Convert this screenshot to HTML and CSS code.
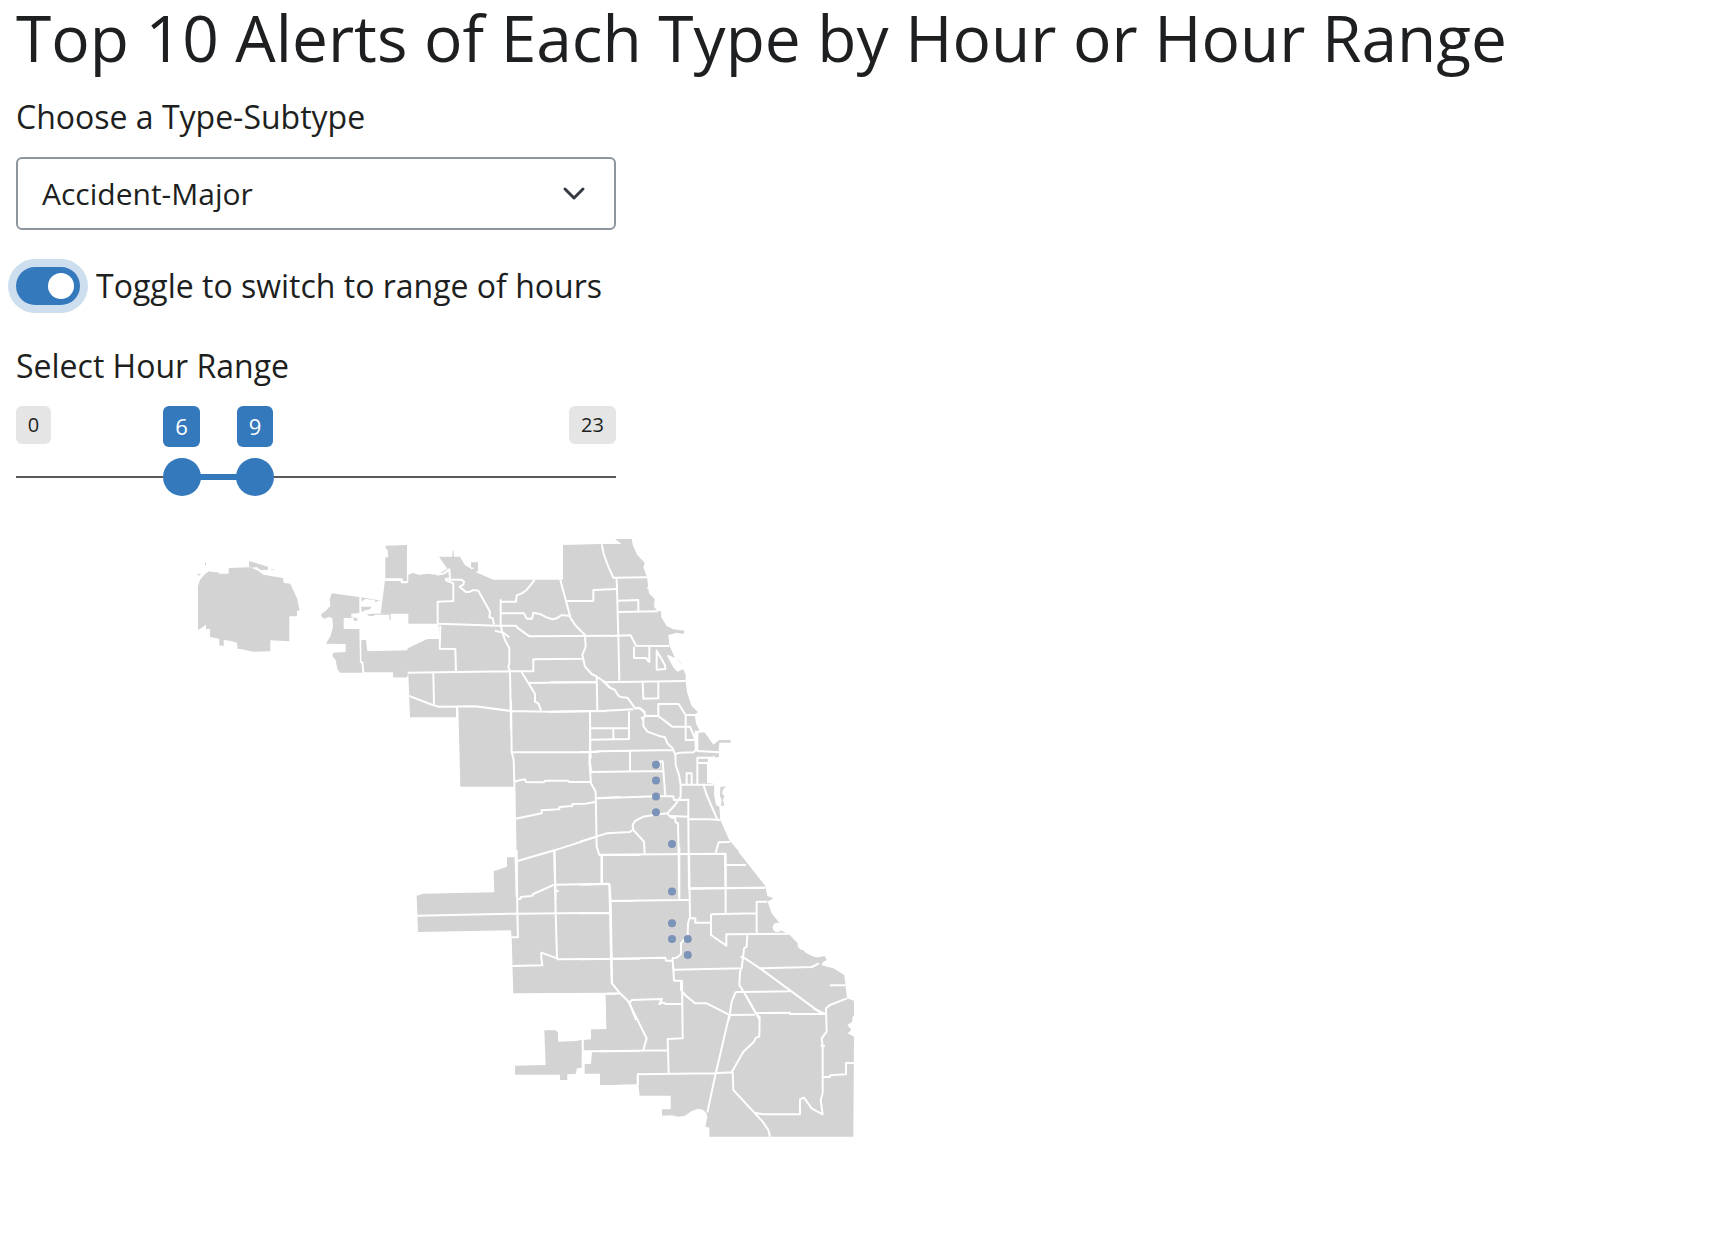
FILE: index.html
```html
<!DOCTYPE html>
<html lang="en">
<head>
<meta charset="utf-8">
<title>Top 10 Alerts</title>
<link rel="stylesheet" href="styles.css">
</head>
<body>
<main class="page">
<h1 class="title">Top 10 Alerts of Each Type by Hour or Hour Range</h1>
<div class="controls">
<div class="label">Choose a Type-Subtype</div>
<div class="select"><span>Accident-Major</span>
<svg class="chevron" viewBox="0 0 24 16"><path d="M3 3l9 9 9-9"/></svg></div>
<div class="toggle-row"><span class="switch"><span class="knob"></span></span><span class="label">Toggle to switch to range of hours</span></div>
<div class="label range-label">Select Hour Range</div>
<div class="slider">
<span class="tag min">0</span><span class="tag max">23</span>
<span class="tag value from">6</span><span class="tag value to">9</span>
<span class="track"></span><span class="bar"></span>
<span class="handle h-from"></span><span class="handle h-to"></span>
</div>
</div>
<svg class="map" viewBox="180 530 690 620">
<g class="land">
<g transform="translate(180 530) scale(.33333)">
<path d="M54,168L60,150 75,132 90,122 92,126 116,127 116,131 146,131 146,114 210,112 235,122 250,134 309,144 311,159 331,161 351,205 359,241 351,242 351,259 328,259 328,334 271,331 271,364 220,365 178,356 173,358 171,338 150,332 131,330 131,348 118,346 118,326 90,321 90,297 78,297 78,284 54,301Z"/>
<path d="M207,93L264,110 264,119 243,121 230,111 217,113 207,110ZM51,133L63,132 56,138ZM75,97h3v8h-3zM273,117h8v2h-8z"/>
<path d="M455,190L538,201 538,249 514,251 514,262 532,264 532,272 521,272 521,264 491,264 491,297 538,297 540,398 545,401 547,428 480,428 472,417 467,390 457,378 460,368 497,366 497,342 438,341 452,317 459,290 457,264 447,261 432,266 423,258 425,251 438,242 451,228 449,209Z"/>
<path d="M544,202L605,212 592,212 588,218 584,210 555,207 545,215ZM544,230L575,230 570,238 555,241 545,247ZM560,252L632,250 632,270 628,268 628,254 585,254 580,258 568,258Z"/>
<path d="M544,330L558,330 562,364 683,361 720,340 720,427 681,427 681,442 640,442 640,427 553,427 550,396 544,392Z"/>
<path d="M617,47L681,45 681,153 669,153 667,145 616,145 616,83 625,80 623,60 617,55Z"/>
</g>
<g transform="translate(370 530) scale(.33333)">
<path d="M45,150L94,150 94,157 115,157 115,134 130,129 147,135 170,131 200,134 232,116 207,80 247,80 248,62 251,62 251,80 270,80 284,104 305,118 314,114 303,112 303,97 324,97 324,122 318,127 370,149 579,149 579,45 692,42 755,42 735,27 785,27 789,47 802,75 824,98 820,112 831,140 834,165 837,190 854,207 852,230 862,242 873,244 874,262 890,288 910,298 944,302 940,312 920,308 895,315 898,345 912,378 930,395 947,435 947,455 952,490 965,528 984,547 974,553 978,580 990,605 1005,608 1030,644 1048,630 1082,630 1082,638 1048,638 1046,663 1047,681 1035,683 1015,690 1011,698 1011,760 1033,762 1000,850 433,850 433,770 271,770 265,534 261,562 120,562 115,430 111,442 69,442 69,427 100,427 113,355 172,327 209,327 205,281 115,281 115,251 32,251Z"/>
</g>
<g transform="translate(580 690) scale(.33333)">
<path d="M-197,240L381,240 381,280 403,282 402,315 408,345 418,350 421,390 447,450 475,482 480,500 520,548 530,565 556,588 556,605 -190,605Z"/>
<path d="M421,291L438,289 428,300 427,312 433,318 429,330 433,346 423,348 425,330 420,318Z"/>
</g>
<g transform="translate(580 820) scale(.33333)">
<path d="M-190,0L420,0 447,60 556,198 562,228 580,235 563,245 575,280 595,305 603,315 600,330 627,343 653,370 653,380 670,395 700,410 720,414 720,600 80,600 78,518 -190,518Z"/>
</g>
<g transform="translate(600 930) scale(.33333)">
<path d="M20,60L610,60 620,72 650,83 674,78 680,90 668,97 665,106 700,115 733,135 741,205 762,212 762,255 757,262 757,275 742,285 754,300 743,310 762,320 760,620 328,620 328,593 316,590 322,560 318,548 308,539 295,536 275,543 255,557 235,560 215,556 186,557 186,538 212,538 212,497 119,497 115,463 0,465 0,298 20,298 17,190Z"/>
</g>
<g transform="translate(400 850) scale(.33333)">
<path d="M650,22L321,22 321,50 281,64 283,127 70,131 50,137 54,246 333,241 335,262 340,433 617,433 620,538 573,538 573,568 550,570 550,602 576,607 573,641 554,643 554,671 602,671 602,705 650,705Z"/>
<path d="M433,541L468,541 474,549 474,575 528,573 547,569 547,653 531,655 527,672 502,673 502,690 480,690 480,674 345,674 345,647 437,645Z"/>
</g>
</g>
<g class="borders">
<g transform="translate(370 530) scale(.33333)">
<path d="M40,150H95V157H113M203,281V215L250,213 250,160 228,151 228,146 240,146 238,118 222,130 200,134M237,149H275L282,155 280,164 269,170 278,178 288,186 300,185 310,180 325,182 360,245 358,262 368,265 372,283M203,281L300,284 380,287 438,287 442,293 478,319 720,317M211,287L209,356 256,357 258,425M113,428L418,424 490,424V388L637,386M392,285V210L394,215H438L440,196 455,190 470,180 494,150M392,210V285L395,300 405,330 418,355 418,402 415,410 420,425 423,600M394,250H462L470,266H486L490,248 510,252 530,262 548,268 560,265 575,255 600,258M375,302L400,308 418,322M571,150L579,180 588,213 602,265 618,288 645,315 647,350 637,375 645,410 665,432 680,440 700,453 720,474M588,213L670,213 670,180 740,177M115,497L180,522 205,530 315,529 423,543 540,545 708,543M190,430L192,523M261,532V562M455,427L475,459 495,492 495,515 505,520 513,541M475,459L680,456M680,438L682,541"/>
</g>
<g transform="translate(550 530) scale(.33333)">
<path d="M155,43L162,75 175,110 190,143 295,142M200,146L205,318 208,452M205,212L265,210V243M205,246L325,244M180,318L242,316 258,347 358,348M252,350V384H288L298,396V350M320,362V419L346,417 345,405ZM0,457H140M163,457L407,453M278,456L280,506 325,505V456M158,455L165,458 180,473 195,480 205,497 215,502 232,503 252,530 255,535 268,533 284,548M0,545L165,542 250,538M292,175h6"/>
<path class="water" d="M355,378L372,387 375,384 388,400 397,415 383,422 374,413Z"/>
</g>
<g transform="translate(400 700) scale(.33333)">
<path d="M333,0L335,155 341,180 343,250 347,480 350,590M337,157L572,156 600,154M340,246L362,240 375,238 378,246 412,247 432,247 435,242 505,242 507,246 572,246M570,35L571,155 572,170 568,185 573,250 587,275 590,440 598,465 605,465V550M347,356L425,340V331L478,328V321L517,318V312L555,311 585,306M590,295L660,291M350,484L463,451 510,436 590,410M463,450L467,600"/>
</g>
<g transform="translate(580 690) scale(.33333)">
<path d="M30,62V186L28,205 35,250M30,115L147,114M100,116V147M147,64V147L30,149M150,183V243M35,246L250,243M52,325L230,319H280L282,330 325,329V388L327,600M237,235L240,214H248L256,319M0,186L45,186 60,184 280,180M162,55L180,54 194,66 195,80 190,82 190,108 202,125 235,137 255,142 262,160 278,175 286,195 287,225 297,255 302,285 302,320 285,345 262,370M183,86L200,77 235,78V42H296L317,75H346M235,78L277,110H330L347,150M317,75V150H347M285,192L300,188 340,187 347,180V125M352,125V183L417,187M345,125H365M352,203V283M350,203H405M352,219H381M302,284H403M320,281V250H335V281M371,286L380,315 412,388M327,387L385,388 422,390M262,370L225,374 190,380 165,393 158,405 160,420 192,455 194,492M0,455L80,430 150,426 160,418M262,370L272,382 286,385 286,396 294,400 296,488 297,620M272,378L325,380M57,494L435,491 437,600M407,488L416,457 450,456M437,524L498,525M330,595L556,593M66,495V580M0,584L88,582M385,210L405,200M75,67V62"/>
</g>
<g transform="translate(580 820) scale(.33333)">
<path d="M88,190L92,243 95,415 96,490 120,520 148,547 168,600M92,243L298,240H330M298,80V240M327,100L330,290M330,295H346V308H393M437,100V280M330,206L556,203M393,283L530,280M530,338V245H562M393,283V345L439,377V343L627,341M330,290L324,310 323,345 303,370V402L290,413 278,415V422H258L256,413 95,416 0,418M278,422L280,449 282,482 303,482V510L315,525 345,550 380,550 410,565 445,583M282,449L487,445M502,345L500,380 492,385 490,405 485,445 480,455 478,495 500,530 538,598M481,410L495,415 540,445 720,577M540,445L695,441 717,430M150,547L155,540 246,537 238,552 250,548 258,552 305,552M467,516L628,514M467,516L455,545 447,600M78,521L120,520M0,280L92,279M600,325h-7"/>
<circle class="water" cx="592" cy="322" r="11"/>
</g>
<g transform="translate(600 930) scale(.33333)">
<path d="M85,215L140,325 130,360M0,364L203,361M246,150L248,325 203,327 206,430M115,433L345,430 395,427 430,365 462,335 468,323 478,320 479,262 465,245 438,197M388,255L345,440 322,548M385,255L465,254M465,249L570,248V252H675L640,235M398,427L400,480 465,550 488,575 505,600 510,620M462,548L490,553H600V508L612,503 635,535 668,553 662,510 668,490 668,350 664,347 675,347M668,347L665,325 680,305 678,235 690,225 741,205M670,441L690,441V436L738,433V399H762M690,166H738M113,463V433"/>
</g>
<g transform="translate(400 850) scale(.33333)">
<path d="M350,0L352,190 354,262H335M350,148L362,146V141L395,138 400,132 463,104 627,101M50,197L350,191 627,188M463,0L467,190 471,325 424,308V324L427,346 337,348M471,328L720,326M605,15V100M598,15H720M628,101L635,400M632,153H700M467,120L476,125M550,604L720,603M548,570V660M714,705V672H720M340,433L650,431"/>
</g>
</g>
<g class="alerts">
<circle cx="656" cy="764.7" r="4"/><circle cx="656" cy="780.6" r="4"/><circle cx="656" cy="796.5" r="4"/><circle cx="656" cy="812.2" r="4"/><circle cx="672" cy="844" r="4"/><circle cx="672" cy="891.5" r="4"/><circle cx="672" cy="923.3" r="4"/><circle cx="672" cy="939" r="4"/><circle cx="687.8" cy="939" r="4"/><circle cx="687.8" cy="955" r="4"/>
</g>
</svg>
</main>
</body>
</html>
```
FILE: styles.css
```css
* { box-sizing: border-box; }
body { margin: 0; background: #fff; color: #1d1f21; font-family: "Open Sans", sans-serif; }
.page { padding: 0 16px; }
.title { margin: 0; font-size: 64px; font-weight: 400; line-height: 75px; white-space: nowrap; }
.controls { width: 600px; padding-top: 18px; }
.label { font-size: 32px; line-height: 48px; white-space: nowrap; }
.select { display: flex; align-items: center; justify-content: space-between; height: 73px; margin-top: 16px; padding: 0 28px 0 24px; border: 2px solid #8d959e; border-radius: 6px; font-size: 30px; }
.chevron { width: 24px; height: 16px; fill: none; stroke: #343a40; stroke-width: 3; stroke-linecap: round; stroke-linejoin: round; }
.toggle-row { display: flex; align-items: center; gap: 16px; height: 48px; margin-top: 32px; }
.switch { display: flex; align-items: center; justify-content: flex-end; flex: none; width: 64px; height: 38px; padding-right: 6px; border-radius: 19px; background: #3579bd; box-shadow: 0 0 0 8px #cddeee; }
.knob { width: 26px; height: 26px; border-radius: 50%; background: #fff; }
.range-label { margin-top: 32px; }
.slider { position: relative; height: 100px; margin-top: 16px; }
.slider > * { position: absolute; }
.tag { top: 0; display: flex; align-items: center; justify-content: center; height: 38px; padding-bottom: 2px; border-radius: 6px; background: #e5e5e5; font-size: 20px; }
.min { left: 0; width: 35px; }
.max { right: 0; width: 47px; }
.value { height: 41px; background: #3579bd; color: #fff; font-size: 22px; }
.from { left: 147px; width: 37px; }
.to { left: 221px; width: 36px; }
.track { top: 70px; left: 0; width: 100%; height: 2px; background: #595959; }
.bar { top: 68px; left: 166px; width: 73px; height: 6px; background: #3579bd; }
.handle { top: 52px; width: 38px; height: 38px; border-radius: 50%; background: #3579bd; }
.h-from { left: 147px; }
.h-to { left: 220px; }
.map { display: block; width: 690px; height: 620px; margin: 24px 0 0 164px; }
.land { fill: #d3d3d3; }
.borders { fill: none; stroke: #fff; stroke-width: 6; stroke-linejoin: round; }
.water { fill: #fff; }
.alerts { fill: #7b93b8; }
```
